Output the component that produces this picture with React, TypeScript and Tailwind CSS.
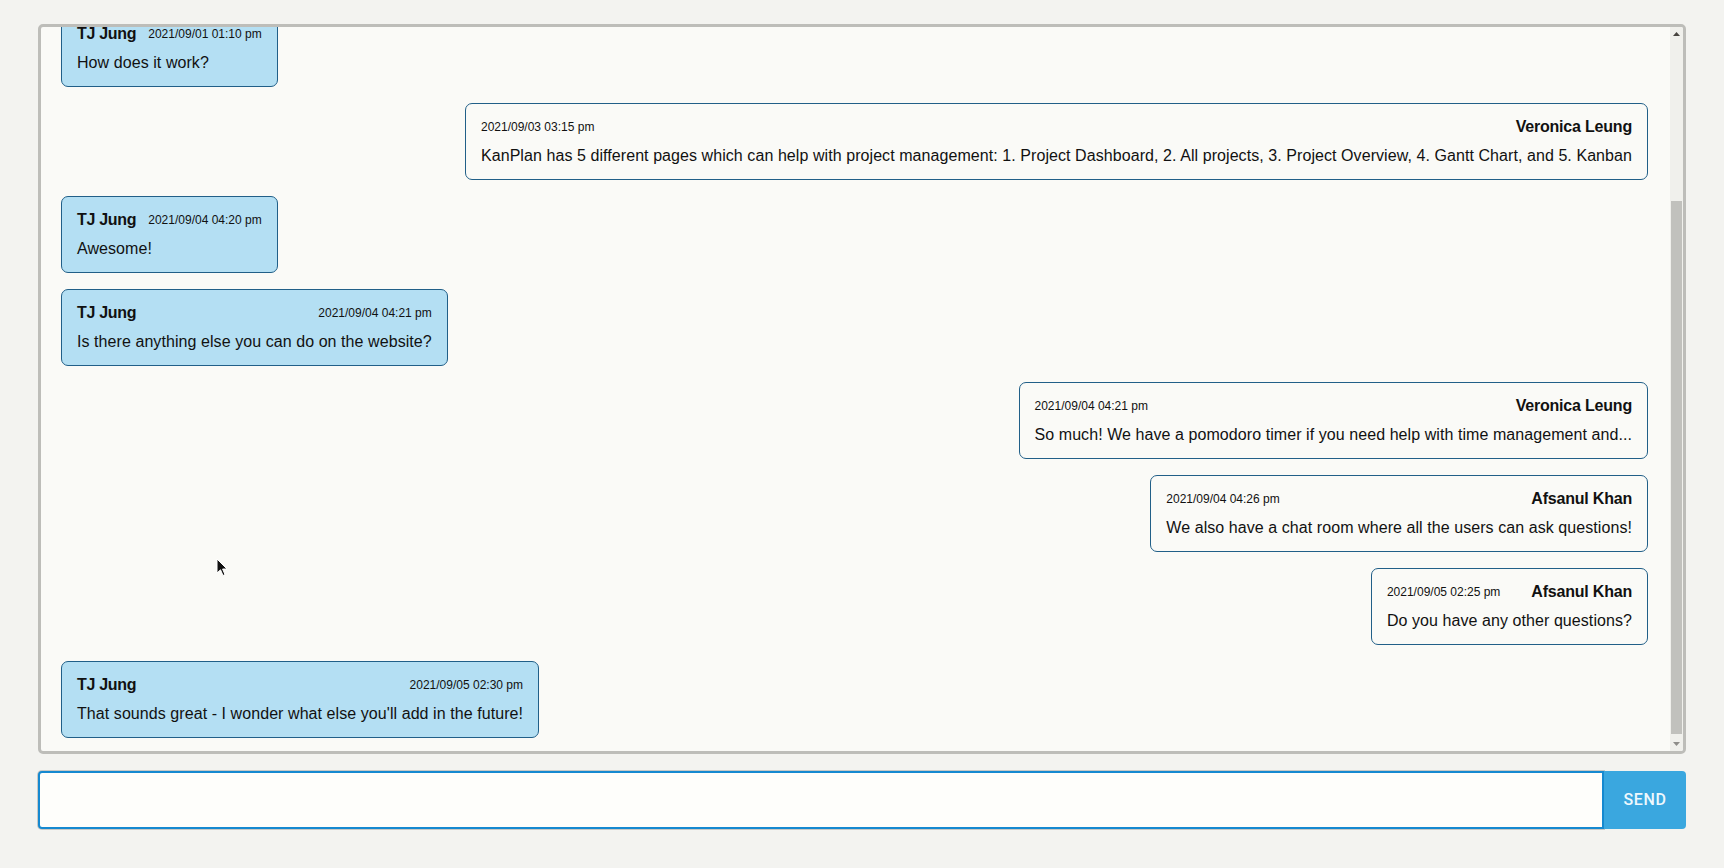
import React from "react";

type Msg = { name: string; date: string; text: string; mine: boolean };

const messages: Msg[] = [
  { name: "TJ Jung", date: "2021/09/01 01:10 pm", text: "How does it work?", mine: true },
  {
    name: "Veronica Leung",
    date: "2021/09/03 03:15 pm",
    text: "KanPlan has 5 different pages which can help with project management: 1. Project Dashboard, 2. All projects, 3. Project Overview, 4. Gantt Chart, and 5. Kanban",
    mine: false,
  },
  { name: "TJ Jung", date: "2021/09/04 04:20 pm", text: "Awesome!", mine: true },
  { name: "TJ Jung", date: "2021/09/04 04:21 pm", text: "Is there anything else you can do on the website?", mine: true },
  {
    name: "Veronica Leung",
    date: "2021/09/04 04:21 pm",
    text: "So much! We have a pomodoro timer if you need help with time management and...",
    mine: false,
  },
  { name: "Afsanul Khan", date: "2021/09/04 04:26 pm", text: "We also have a chat room where all the users can ask questions!", mine: false },
  { name: "Afsanul Khan", date: "2021/09/05 02:25 pm", text: "Do you have any other questions?", mine: false },
  { name: "TJ Jung", date: "2021/09/05 02:30 pm", text: "That sounds great - I wonder what else you'll add in the future!", mine: true },
];

function Bubble({ m }: { m: Msg }) {
  if (m.mine) {
    return (
      <div className="self-start shrink-0 rounded-[7px] border border-[#215f88] bg-[#b4dff3] px-[15px] py-[11px] text-[#111]">
        <div className="flex h-6 items-center justify-between gap-3 whitespace-nowrap">
          <span className="text-[16px] font-bold tracking-[-0.3px]">{m.name}</span>
          <span className="text-[12px]">{m.date}</span>
        </div>
        <div className="mt-[5px] whitespace-nowrap text-[16px] leading-6 tracking-[0.07px]">{m.text}</div>
      </div>
    );
  }
  return (
    <div className="self-end shrink-0 rounded-[7px] border border-[#215f88] bg-[#fafaf7] px-[15px] py-[11px] text-[#111]">
      <div className="flex h-6 items-center justify-between gap-5 whitespace-nowrap">
        <span className="text-[12px]">{m.date}</span>
        <span className="text-[16px] font-bold tracking-[-0.2px]">{m.name}</span>
      </div>
      <div className="mt-[5px] whitespace-nowrap text-[16px] leading-6 tracking-[0.07px]">{m.text}</div>
    </div>
  );
}

function Scrollbar() {
  return (
    <div className="flex w-[13px] shrink-0 flex-col bg-[#f0f0ec]">
      <div className="flex h-[14px] items-center justify-center">
        <svg width="7" height="4" viewBox="0 0 7 4">
          <polygon points="0,4 7,4 3.5,0" fill="#48443f" />
        </svg>
      </div>
      <div className="flex flex-1 flex-col">
        <div className="h-[160px]" />
        <div className="mx-[1px] flex-1 bg-[#c1c1bd]" />
        <div className="h-[3px]" />
      </div>
      <div className="flex h-[14px] items-center justify-center">
        <svg width="7" height="4" viewBox="0 0 7 4">
          <polygon points="0,0 7,0 3.5,4" fill="#8e8d8a" />
        </svg>
      </div>
    </div>
  );
}

export default function App() {
  return (
    <div className="relative flex h-[868px] w-full flex-col bg-[#f3f3f0] px-[38px] pt-6 font-['Liberation_Sans',Arial,sans-serif]">
      <div className="flex h-[730px] shrink-0 overflow-hidden rounded-[5px] border-[3px] border-[#bdbdb9] bg-[#fafaf7]">
        <div className="flex flex-1 flex-col justify-end gap-4 overflow-hidden pb-[13px] pl-5 pr-[22px]">
          {messages.map((m, i) => (
            <Bubble key={i} m={m} />
          ))}
        </div>
        <Scrollbar />
      </div>
      <div className="mt-[17px] flex h-[58px] shrink-0">
        <input
          className="h-full flex-1 rounded-l-[4px] border-2 border-[#1589d0] bg-[#fefefb] px-3 text-[16px] shadow-[0_0_0_1px_#c9c9c5] outline-none"
          type="text"
        />
        <button className="flex h-full w-[82px] items-center justify-center rounded-r-[4px] bg-[#3aa7df] font-['Roboto',sans-serif] text-[16px] font-medium tracking-[0.04em] text-[#eef8fd]">
          SEND
        </button>
      </div>
      <svg className="absolute left-[216px] top-[558px]" width="13" height="20" viewBox="0 0 13 20">
        <path d="M1 1 L1 15 L4.5 11.8 L7 17.5 L9 16.6 L6.6 11 L11 11 Z" fill="#111" stroke="#fff" strokeWidth="1" />
      </svg>
    </div>
  );
}
